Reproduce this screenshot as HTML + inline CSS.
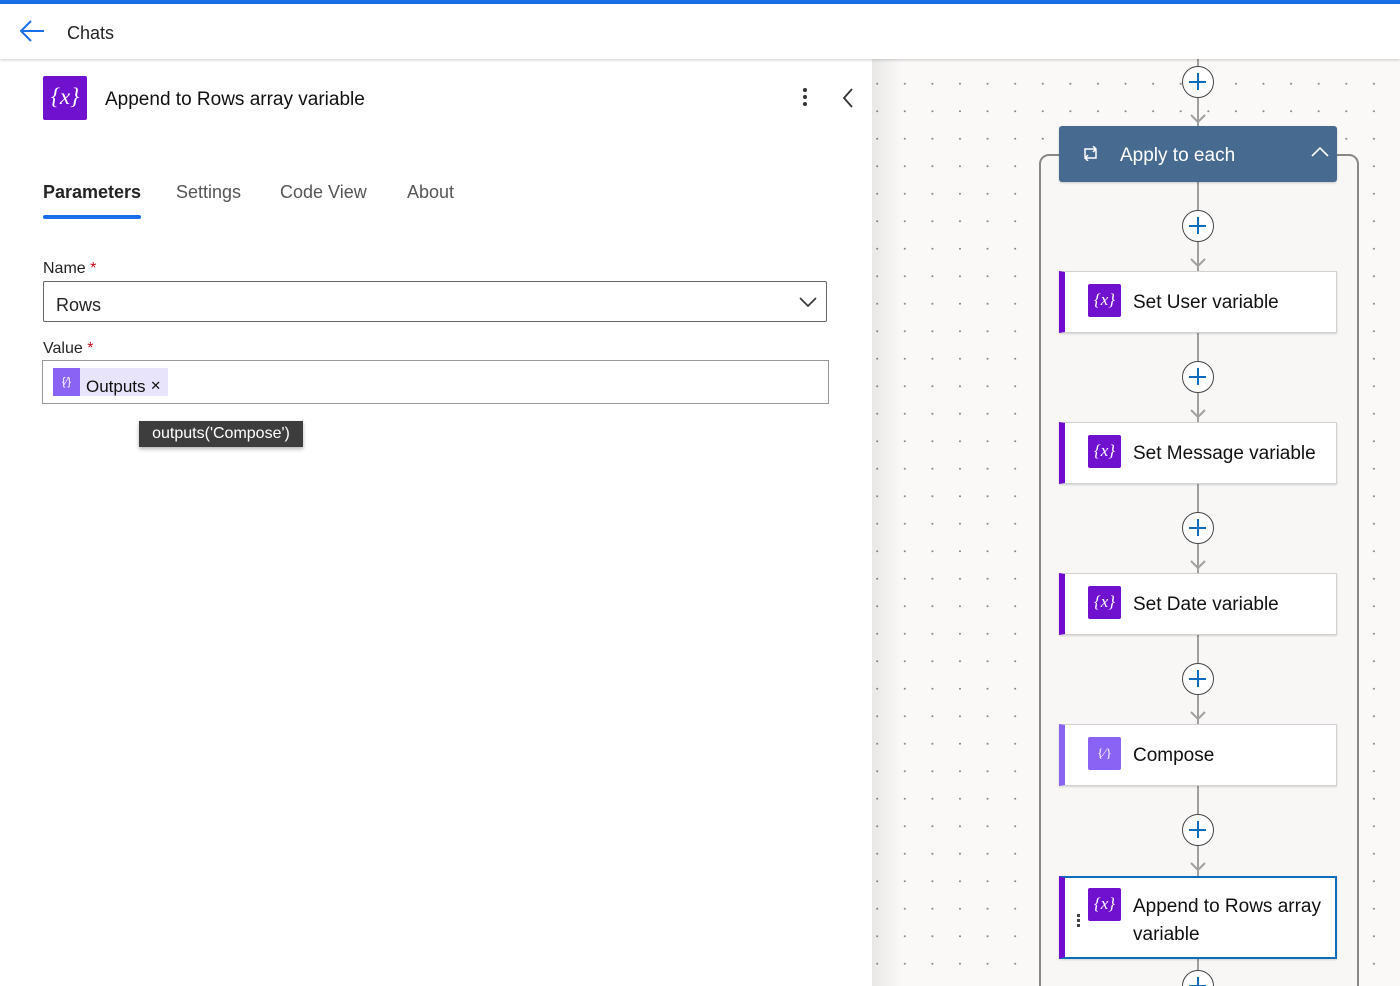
<!DOCTYPE html>
<html><head><meta charset="utf-8"><style>
*{box-sizing:border-box;margin:0;padding:0}
html,body{width:1400px;height:986px;overflow:hidden}
body{font-family:"Liberation Sans",sans-serif;background:#fff;position:relative;color:#242424}
.topbar{position:absolute;left:0;top:0;width:1400px;height:4px;background:#1a6fe8}
.header{position:absolute;left:0;top:4px;width:1400px;height:55px;background:#fff;box-shadow:0 1px 3px rgba(0,0,0,.2);z-index:5}
.canvas{position:absolute;left:872px;top:59px;width:528px;height:927px;background-color:#faf9f8;background-image:radial-gradient(circle,#8a8886 0.8px,transparent 1.2px);background-size:27.6px 27.5px;background-position:19px 11px}
.shade{position:absolute;left:872px;top:59px;width:30px;height:927px;background:linear-gradient(90deg,rgba(0,0,0,.07),rgba(0,0,0,0))}
.loop{position:absolute;left:1039px;top:154px;width:320px;height:845px;border:2px solid #8a8886;border-radius:10px;background:#f8f7f6}
.vline{position:absolute;left:1197px;width:2px;background:#a19f9d}
.plus{position:absolute;width:32px;height:32px;border-radius:50%;border:1.5px solid #444;background:#fff;left:1182px}
.plus:before{content:"";position:absolute;left:6px;top:14px;width:17px;height:2px;background:#0f6cbd}
.plus:after{content:"";position:absolute;left:14px;top:6px;width:2px;height:17px;background:#0f6cbd}
.arrow{position:absolute;left:1190px;width:16px;height:10px}
.card{position:absolute;left:1059px;width:278px;height:62px;background:#fff;border:1px solid #d1d1d1;border-left:6px solid #6f0ad1;box-shadow:0 1px 2px rgba(0,0,0,.15);font-size:19px;color:#111}
.card .ic{position:absolute;left:23px;top:12px;width:33px;height:33px;background:#7011d0;border-radius:2px;color:#fff;font-family:"Liberation Serif",serif;font-style:italic;font-size:17px;text-align:center;line-height:31px}
.card .t{position:absolute;left:68px;top:20px}
</style></head><body>
<div class="topbar"></div>
<div class="header">
<svg style="position:absolute;left:20px;top:16px" width="25" height="22" viewBox="0 0 25 22"><path d="M24 11H2M11 1L1 11l10 10" fill="none" stroke="#1a6fe8" stroke-width="2"/></svg>
<div style="position:absolute;left:67px;top:19px;font-size:18px">Chats</div>
</div>

<div style="position:absolute;left:43px;top:76px;width:44px;height:44px;background:#7011d0;border-radius:2px;color:#fff;font-family:'Liberation Serif',serif;font-style:italic;font-size:23px;text-align:center;line-height:42px">{x}</div>
<div style="position:absolute;left:105px;top:89px;font-size:19px;color:#111">Append to Rows array variable</div>
<div style="position:absolute;left:803px;top:88px;width:4px;height:20px">
<div style="width:4px;height:4px;border-radius:50%;background:#333;margin-bottom:3px"></div><div style="width:4px;height:4px;border-radius:50%;background:#333;margin-bottom:3px"></div><div style="width:4px;height:4px;border-radius:50%;background:#333"></div></div>
<svg style="position:absolute;left:842px;top:88px" width="12" height="20"><path d="M10 1L2 10l8 9" fill="none" stroke="#333" stroke-width="1.8"/></svg>

<div style="position:absolute;left:43px;top:182px;font-size:18px;font-weight:bold;color:#242424">Parameters</div>
<div style="position:absolute;left:43px;top:215px;width:98px;height:4px;border-radius:2px;background:#1a6fe8"></div>
<div style="position:absolute;left:176px;top:182px;font-size:18px;color:#555">Settings</div>
<div style="position:absolute;left:280px;top:182px;font-size:18px;color:#555">Code View</div>
<div style="position:absolute;left:407px;top:182px;font-size:18px;color:#555">About</div>

<div style="position:absolute;left:43px;top:260px;font-size:16px">Name <span style="color:#c50f1f">*</span></div>
<div style="position:absolute;left:43px;top:281px;width:784px;height:41px;border:1px solid #666;border-radius:2px"></div>
<div style="position:absolute;left:56px;top:295px;font-size:18px">Rows</div>
<svg style="position:absolute;left:799px;top:296px" width="18" height="12"><path d="M1 2l8 8 8-8" fill="none" stroke="#333" stroke-width="1.6"/></svg>

<div style="position:absolute;left:43px;top:340px;font-size:16px">Value <span style="color:#c50f1f">*</span></div>
<div style="position:absolute;left:42px;top:360px;width:787px;height:44px;border:1px solid #999"></div>
<div style="position:absolute;left:53px;top:368px;width:115px;height:28px;background:#e8e4fb"></div>
<div style="position:absolute;left:53px;top:368px;width:27px;height:28px;background:#8a63f5;color:#fff;font-size:11px;text-align:center;line-height:28px">{&#8725;}</div>
<div style="position:absolute;left:86px;top:377px;font-size:17px;color:#111">Outputs <span style="font-size:13px;position:relative;top:-2px">✕</span></div>
<div style="position:absolute;left:139px;top:421px;width:164px;height:26px;background:#3d3d3d;box-shadow:0 2px 4px rgba(0,0,0,.3);color:#fff;font-size:16px;line-height:26px;text-align:center">outputs('Compose')</div>

<div class="canvas"></div>
<div class="shade"></div>
<div class="loop"></div>

<div class="vline" style="top:59px;height:927px"></div>
<div style="position:absolute;left:1059px;top:126px;width:278px;height:56px;background:#476a91;border-radius:3px;box-shadow:0 1px 2px rgba(0,0,0,.2)">
<svg style="position:absolute;left:23px;top:20px" width="17" height="15" viewBox="0 0 17 15"><path d="M3 11V3h11M11 0l3 3-3 3M14 4v8H3M6 15l-3-3 3-3" fill="none" stroke="#fff" stroke-width="1.5"/></svg>
<div style="position:absolute;left:61px;top:19px;font-size:19px;color:#fff">Apply to each</div>
<svg style="position:absolute;left:252px;top:20px" width="18" height="11"><path d="M1 10l8-8 8 8" fill="none" stroke="#fff" stroke-width="1.6"/></svg>
</div>

<div class="plus" style="top:66px"></div>
<div class="plus" style="top:210px"></div>
<div class="plus" style="top:361px"></div>
<div class="plus" style="top:512px"></div>
<div class="plus" style="top:663px"></div>
<div class="plus" style="top:814px"></div>
<div class="plus" style="top:970px"></div>

<svg class="arrow" style="top:114px"><path d="M1 1l7 7 7-7" fill="none" stroke="#a19f9d" stroke-width="2"/></svg>
<svg class="arrow" style="top:258px"><path d="M1 1l7 7 7-7" fill="none" stroke="#a19f9d" stroke-width="2"/></svg>
<svg class="arrow" style="top:409px"><path d="M1 1l7 7 7-7" fill="none" stroke="#a19f9d" stroke-width="2"/></svg>
<svg class="arrow" style="top:560px"><path d="M1 1l7 7 7-7" fill="none" stroke="#a19f9d" stroke-width="2"/></svg>
<svg class="arrow" style="top:711px"><path d="M1 1l7 7 7-7" fill="none" stroke="#a19f9d" stroke-width="2"/></svg>
<svg class="arrow" style="top:862px"><path d="M1 1l7 7 7-7" fill="none" stroke="#a19f9d" stroke-width="2"/></svg>

<div class="card" style="top:271px"><div class="ic">{x}</div><div class="t">Set User variable</div></div>
<div class="card" style="top:422px"><div class="ic">{x}</div><div class="t">Set Message variable</div></div>
<div class="card" style="top:573px"><div class="ic">{x}</div><div class="t">Set Date variable</div></div>
<div class="card" style="top:724px;border-left-color:#8a63f5"><div class="ic" style="background:#8a63f5;font-style:normal;font-size:13px">{&#8725;}</div><div class="t">Compose</div></div>
<div class="card" style="top:876px;height:83px;border:2px solid #0f6cbd;border-left:6px solid #6f0ad1"><div class="ic" style="top:10px">{x}</div><div class="t" style="top:15px;line-height:28px">Append to Rows array<br>variable</div>
<div style="position:absolute;left:12px;top:36px;width:3px"><div style="width:3px;height:3px;background:#444;margin-bottom:2px"></div><div style="width:3px;height:3px;background:#444;margin-bottom:2px"></div><div style="width:3px;height:3px;background:#444"></div></div></div>
</body></html>
